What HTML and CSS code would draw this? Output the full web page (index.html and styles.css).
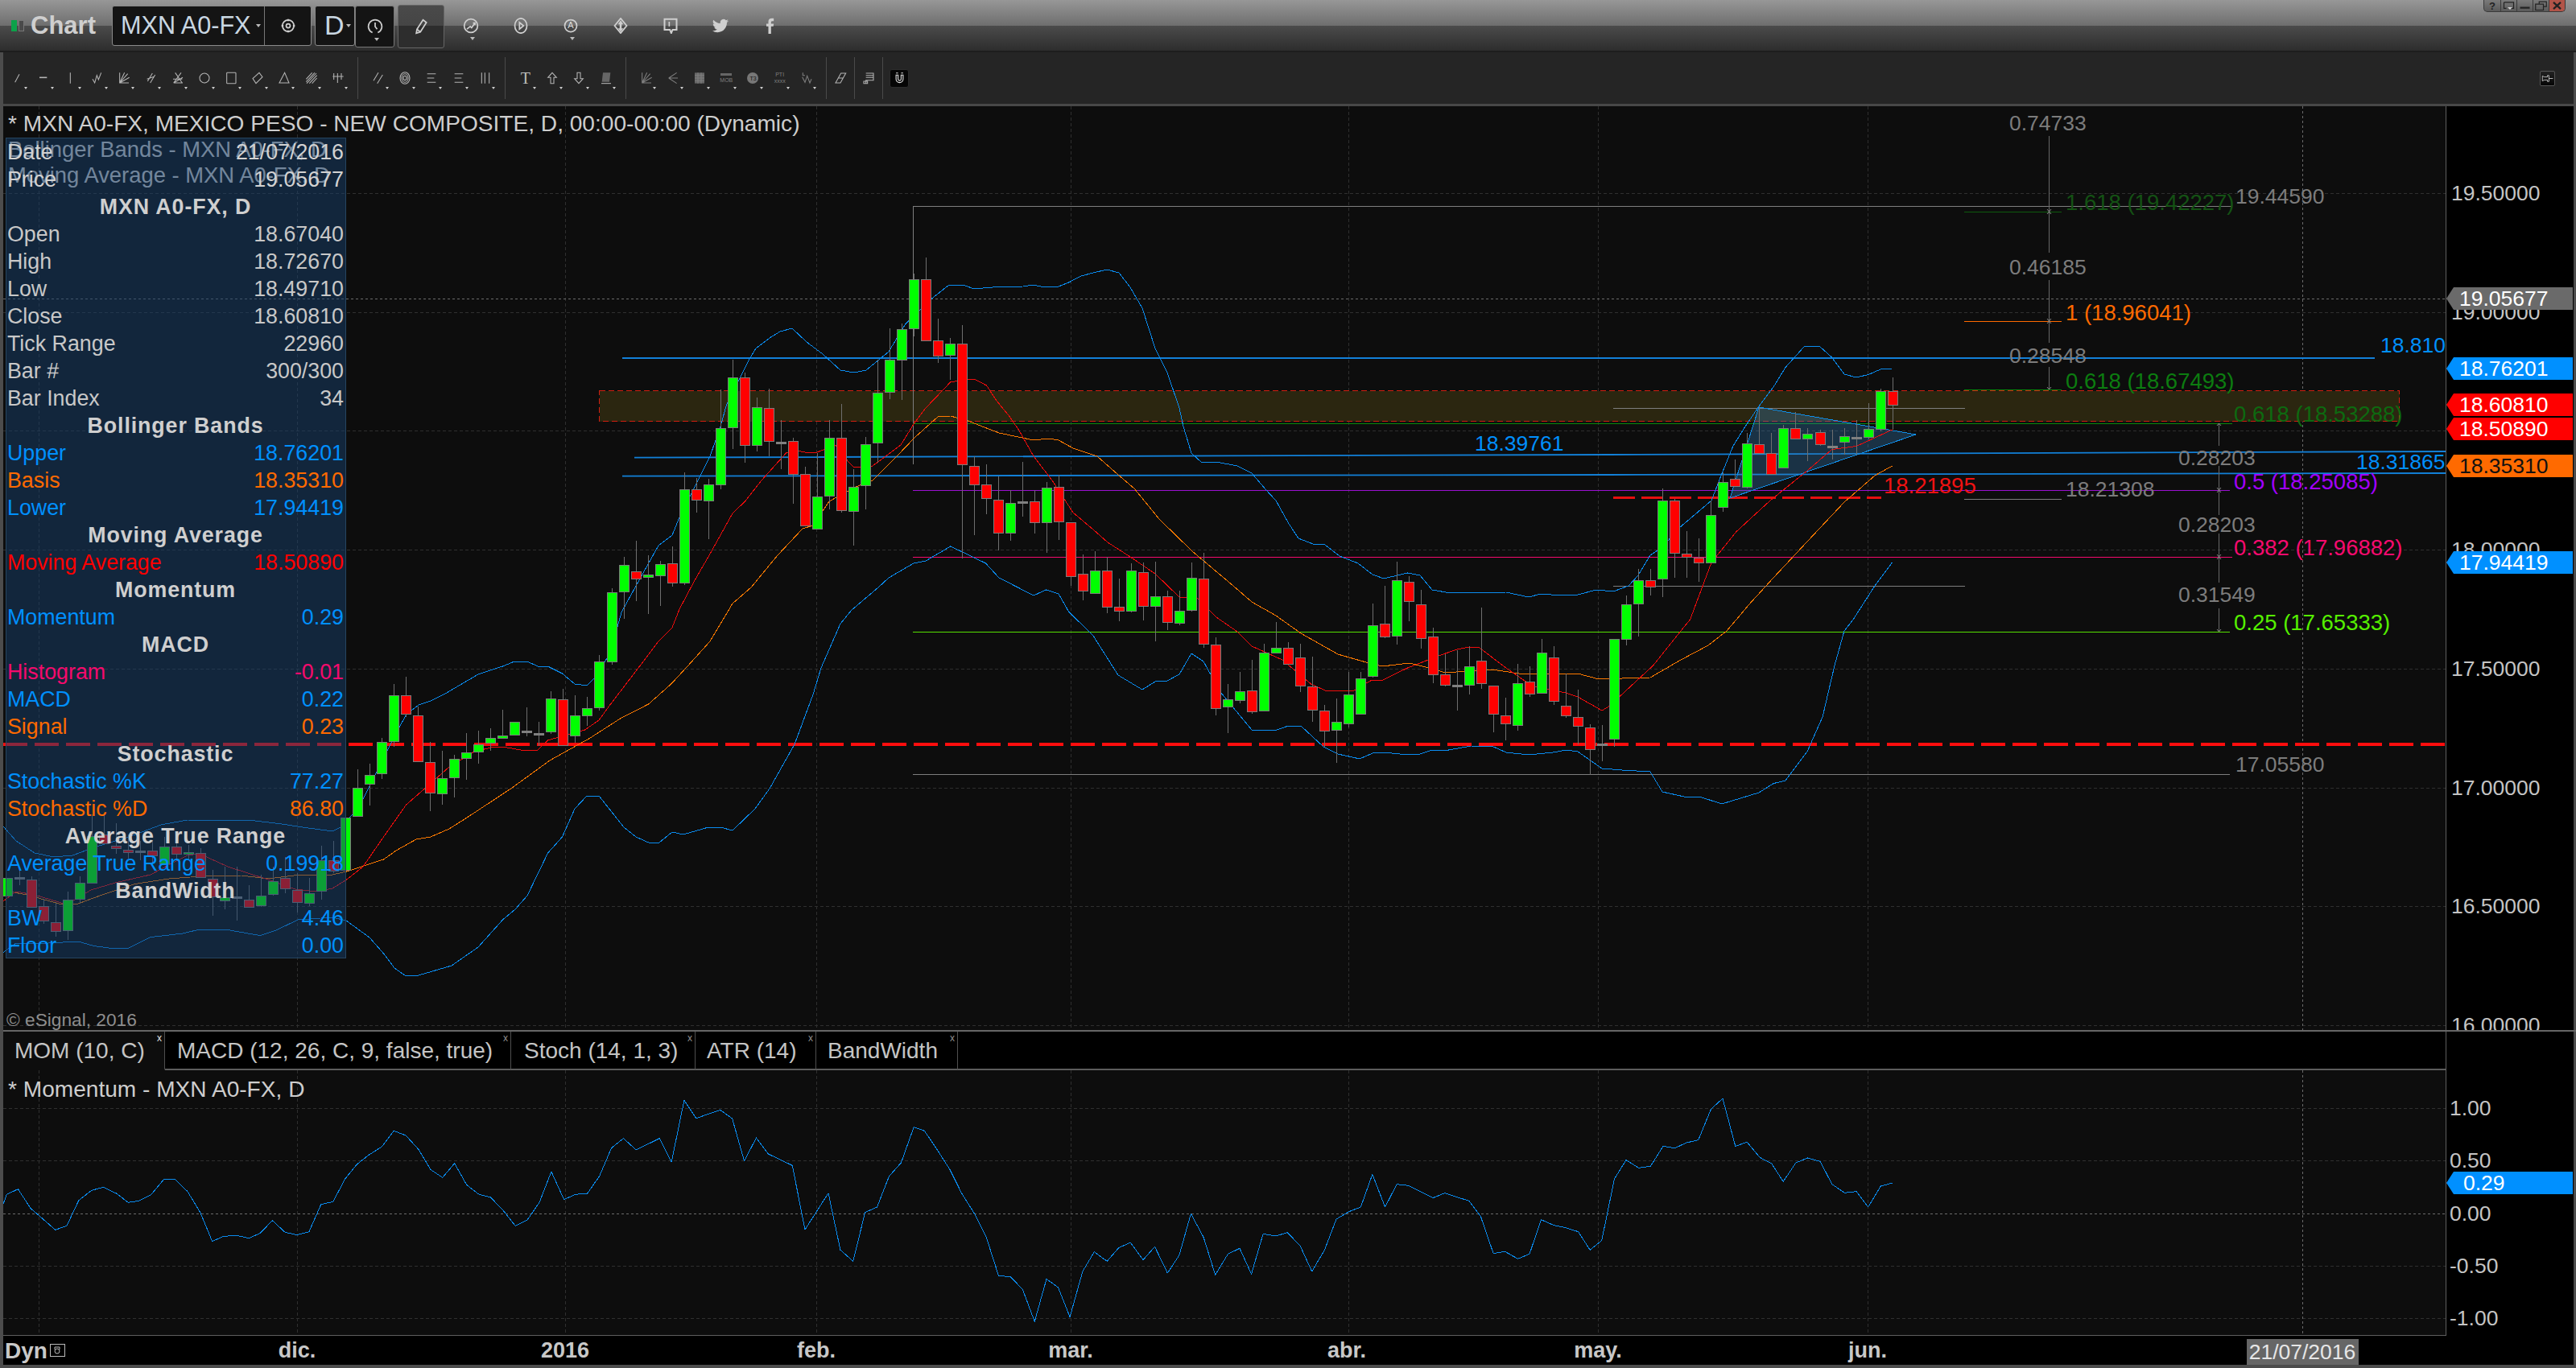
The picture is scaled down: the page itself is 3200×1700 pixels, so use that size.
FILE: index.html
```html
<!DOCTYPE html>
<html lang="es">
<head>
<meta charset="utf-8">
<title>Chart</title>
<link rel="stylesheet" href="styles.css">
</head>
<body>
<svg class="sprite" aria-hidden="true">
  <symbol id="i-line" viewBox="0 0 24 24"><path d="M7 20L15 5"/></symbol>
  <symbol id="i-dash" viewBox="0 0 24 24"><path d="M3 11H17" stroke-width="2.4"/></symbol>
  <symbol id="i-vert" viewBox="0 0 24 24"><path d="M11 2V22"/></symbol>
  <symbol id="i-zig" viewBox="0 0 24 24"><path d="M3 14L7 21L11 7L14 15L19 2"/></symbol>
  <symbol id="i-fan" viewBox="0 0 24 24"><path d="M4 2V21H21M4 21L19 4M4 21L22 11M4 21L13 2"/></symbol>
  <symbol id="i-par" viewBox="0 0 24 24"><path d="M5 18L14 3M10 21L19 6M4 14L18 9"/></symbol>
  <symbol id="i-gann" viewBox="0 0 24 24"><path d="M4 21L18 2M4 21L21 11M4 21H21M7 2L20 21M3 14H20"/></symbol>
  <symbol id="i-circle" viewBox="0 0 24 24"><circle cx="12" cy="12" r="9"/></symbol>
  <symbol id="i-rect" viewBox="0 0 24 24"><rect x="4" y="2" width="17" height="20" rx="1"/></symbol>
  <symbol id="i-diamond" viewBox="0 0 24 24"><path d="M15 2L21 10L9 22L3 13Z"/></symbol>
  <symbol id="i-tri" viewBox="0 0 24 24"><path d="M13 2L21 21L3 21Z"/></symbol>
  <symbol id="i-hatch" viewBox="0 0 24 24"><path d="M2 14L13 2M2 19L18 2M3 22L21 3M8 22L22 7M13 22L22 12"/></symbol>
  <symbol id="i-fork" viewBox="0 0 24 24"><path d="M4 3V15M11 3V21M18 3V15M2 9H22"/></symbol>
  <symbol id="i-dslash" viewBox="0 0 24 24"><path d="M3 17L12 2M10 22L20 6"/></symbol>
  <symbol id="i-rings" viewBox="0 0 24 24"><ellipse cx="12" cy="12" rx="9" ry="11"/><ellipse cx="12" cy="12" rx="6" ry="8"/><ellipse cx="12" cy="12" rx="3" ry="4"/></symbol>
  <symbol id="i-lines" viewBox="0 0 24 24"><path d="M4 4H20M4 12H17M4 20H20"/></symbol>
  <symbol id="i-bars" viewBox="0 0 24 24"><path d="M5 2V22M11 2V22M19 2V22"/></symbol>
  <symbol id="i-up" viewBox="0 0 24 24"><path d="M12 2L20 11H15V22H9V11H4Z"/></symbol>
  <symbol id="i-down" viewBox="0 0 24 24"><path d="M9 2H15V13H20L12 22L4 13H9Z"/></symbol>
  <symbol id="i-block" viewBox="0 0 24 24"><path class="solid-dim" d="M6 2H20L18 19H4Z"/><path d="M3 22H21"/></symbol>
  <symbol id="i-fan2" viewBox="0 0 24 24"><path d="M4 12L19 2M4 12L21 12M4 12L19 22"/></symbol>
  <symbol id="i-table" viewBox="0 0 24 24"><path class="solid-dim" d="M3 2H21V22H3Z"/><path d="M3 7H21M3 12H21M3 17H21M9 2V22M15 2V22"/></symbol>
  <symbol id="i-wave" viewBox="0 0 24 24"><path d="M4 10L9 20L13 8L18 21L21 14M5 2V7H9"/></symbol>
  <symbol id="i-eraser" viewBox="0 0 24 24"><path d="M13 3H22L12 21H3ZM8 12H17"/></symbol>
  <symbol id="i-note" viewBox="0 0 24 24"><path d="M7 3H21V16H7V22M7 7H21M7 11H21M3 18H10V22H3Z"/></symbol>
  <symbol id="i-magnet" viewBox="0 0 24 24"><path d="M5 6V14A7 7 0 0 0 19 14V6H15V14A3 3 0 0 1 9 14V6Z"/><path d="M5 2H9M15 2H19"/></symbol>
  <symbol id="i-pin" viewBox="0 0 24 24"><path d="M2 7L6 9H12V6L15 6V18L12 18V15H6L2 17ZM15 12H23"/></symbol>
  <symbol id="i-gear" viewBox="0 0 24 24"><circle cx="12" cy="12" r="8.5"/><circle cx="12" cy="12" r="3"/><path d="M12 2V5M12 19V22M2 12H5M19 12H22" stroke-width="3"/></symbol>
  <symbol id="i-clock" viewBox="0 0 24 24"><path d="M8 21A10 10 0 1 1 16 21M12 6V12L15 16"/></symbol>
  <symbol id="i-pencil" viewBox="0 0 24 24"><path d="M15 2L20 6L11 20L5 22L6 16ZM6 16L11 20"/></symbol>
  <symbol id="i-trend" viewBox="0 0 24 24"><circle cx="12" cy="12" r="10"/><path d="M6 17L11 13L13 15L18 8M15 8H18V11"/></symbol>
  <symbol id="i-play" viewBox="0 0 24 24"><ellipse cx="12" cy="12" rx="9" ry="11"/><path d="M10 7L16 12L10 17Z"/></symbol>
  <symbol id="i-swap" viewBox="0 0 24 24"><path d="M12 1L21 12L12 23L3 12Z"/><path class="solid" d="M12 4L16 10H13.5V16H16L12 21L8 16H10.5V10H8Z"/></symbol>
  <symbol id="i-bubble" viewBox="0 0 24 24"><path d="M3 2H21V18H15L13 23L11 18H3Z" stroke-width="2.4"/><path d="M10 6V13" stroke-width="2"/></symbol>
  <symbol id="i-bird" viewBox="0 0 24 24"><path class="solid" d="M23.95 4.57a10 10 0 0 1-2.82.78 4.96 4.96 0 0 0 2.16-2.72 9.9 9.9 0 0 1-3.12 1.18 4.92 4.92 0 0 0-8.38 4.48A13.98 13.98 0 0 1 1.64 3.16 4.92 4.92 0 0 0 3.2 9.72a4.9 4.9 0 0 1-2.23-.61v.06a4.92 4.92 0 0 0 3.95 4.83 4.9 4.9 0 0 1-2.21.08 4.93 4.93 0 0 0 4.6 3.42A9.87 9.87 0 0 1 0 19.54a13.94 13.94 0 0 0 7.55 2.21c9.05 0 14-7.5 14-13.98 0-.21 0-.42-.02-.63a10 10 0 0 0 2.46-2.55z"/></symbol>
  <symbol id="i-face" viewBox="0 0 24 24"><path class="solid" d="M9 24V13H6V9H9V6C9 2.5 11 1 14 1H17V5H15C13.600 5 13 5.600 13 7V9H17L16.400 13H13V24Z"/></symbol>
  <symbol id="w-drop" viewBox="0 0 20 15"><path d="M2 2H18V12H12M2 2V12H6"/><path class="solid" d="M8 10H16L12 14Z"/></symbol>
  <symbol id="w-min" viewBox="0 0 20 15"><path d="M2 11H18" stroke-width="3"/></symbol>
  <symbol id="w-max" viewBox="0 0 20 15"><path d="M7 5V1H19V9H14M1 5H14V15H1Z" stroke-width="1.600"/></symbol>
  <symbol id="w-close" viewBox="0 0 20 15"><path d="M4 2L16 13M16 2L4 13" stroke-width="3"/></symbol>
</svg>

<div class="window">
  <header class="titlebar">
    <span class="led led-on"></span><span class="led"></span>
    <span class="app-title">Chart</span>
    <div class="symbol-box">
      <span class="symbol-name">MXN A0-FX<i class="caret caret-light"></i></span>
      <span class="symbol-gear"><svg class="ico ico-title"><use href="#i-gear"/></svg></span>
    </div>
    <div class="interval-box">D<i class="caret caret-light"></i></div>
    <div class="clock-box"><svg class="ico ico-title"><use href="#i-clock"/></svg><i class="caret caret-under"></i></div>
    <div class="pencil-box"><svg class="ico ico-title"><use href="#i-pencil"/></svg></div>
    <div class="title-tools">
      <span class="title-tool"><svg class="ico ico-title"><use href="#i-trend"/></svg><i class="caret caret-under"></i></span>
      <span class="title-tool"><svg class="ico ico-title"><use href="#i-play"/></svg></span>
      <span class="title-tool"><svg class="ico ico-title"><use href="#i-circle"/></svg><b class="a-mark">A</b><i class="caret caret-under"></i></span>
      <span class="title-tool"><svg class="ico ico-title"><use href="#i-swap"/></svg></span>
      <span class="title-tool"><svg class="ico ico-title"><use href="#i-bubble"/></svg></span>
      <span class="title-tool"><svg class="ico ico-title"><use href="#i-bird"/></svg></span>
      <span class="title-tool"><svg class="ico ico-title"><use href="#i-face"/></svg></span>
    </div>
    <div class="window-buttons">
      <span class="win-btn">?</span>
      <span class="win-btn"><svg class="win-ico"><use href="#w-drop"/></svg></span>
      <span class="win-btn"><svg class="win-ico"><use href="#w-min"/></svg></span>
      <span class="win-btn"><svg class="win-ico"><use href="#w-max"/></svg></span>
      <span class="win-btn win-close"><svg class="win-ico"><use href="#w-close"/></svg></span>
    </div>
  </header>

  <nav class="toolbar">
    <div class="tool-group">
      <span class="tool"><svg class="ico"><use href="#i-line"/></svg></span>
      <span class="tool"><svg class="ico"><use href="#i-dash"/></svg></span>
      <span class="tool"><svg class="ico"><use href="#i-vert"/></svg></span>
      <span class="tool"><svg class="ico"><use href="#i-zig"/></svg></span>
      <span class="tool"><svg class="ico"><use href="#i-fan"/></svg></span>
      <span class="tool"><svg class="ico"><use href="#i-par"/></svg></span>
      <span class="tool"><svg class="ico"><use href="#i-gann"/></svg></span>
      <span class="tool"><svg class="ico"><use href="#i-circle"/></svg></span>
      <span class="tool"><svg class="ico"><use href="#i-rect"/></svg></span>
      <span class="tool"><svg class="ico"><use href="#i-diamond"/></svg></span>
      <span class="tool"><svg class="ico"><use href="#i-tri"/></svg></span>
      <span class="tool"><svg class="ico"><use href="#i-hatch"/></svg></span>
      <span class="tool"><svg class="ico"><use href="#i-fork"/></svg></span>
    </div>
    <div class="tool-group">
      <span class="tool"><svg class="ico"><use href="#i-dslash"/></svg></span>
      <span class="tool"><svg class="ico"><use href="#i-rings"/></svg></span>
      <span class="tool"><svg class="ico"><use href="#i-lines"/></svg></span>
      <span class="tool"><svg class="ico"><use href="#i-lines"/></svg></span>
      <span class="tool"><svg class="ico"><use href="#i-bars"/></svg></span>
    </div>
    <div class="tool-group">
      <span class="tool tool-t">T</span>
      <span class="tool"><svg class="ico"><use href="#i-up"/></svg></span>
      <span class="tool"><svg class="ico"><use href="#i-down"/></svg></span>
      <span class="tool"><svg class="ico"><use href="#i-block"/></svg></span>
    </div>
    <div class="tool-group tool-group-dim">
      <span class="tool"><svg class="ico"><use href="#i-fan"/></svg></span>
      <span class="tool"><svg class="ico"><use href="#i-fan2"/></svg></span>
      <span class="tool"><svg class="ico"><use href="#i-table"/></svg></span>
      <span class="tool tool-mob">MOB</span>
      <span class="tool tool-t3">T3</span>
      <span class="tool tool-pti">PTI<br>xxxx</span>
      <span class="tool"><svg class="ico"><use href="#i-wave"/></svg></span>
    </div>
    <div class="tool-group"><span class="tool tool-plain"><svg class="ico"><use href="#i-eraser"/></svg></span></div>
    <div class="tool-group"><span class="tool tool-plain"><svg class="ico"><use href="#i-note"/></svg></span></div>
    <div class="tool-group tool-group-last"><span class="magnet-box"><svg class="ico ico-magnet"><use href="#i-magnet"/></svg></span></div>
    <span class="pin-box"><svg class="ico ico-pin"><use href="#i-pin"/></svg></span>
  </nav>

  <main class="main-pane">
    <svg class="chart" id="mainChart" width="3193" height="1148" viewBox="4 132 3193 1148">
      <rect class="axis-bg" x="3039" y="132" width="158" height="1148"/>
      <g class="grid">
        <path d="M48 132V1280M369 132V1280M702 132V1280M1014 132V1280M1330 132V1280M1675 132V1280M1985 132V1280M2320 132V1280"/>
        <path d="M4 240.500H3038M4 388.500H3038M4 535.500H3038M4 683.500H3038M4 831.500H3038M4 979.500H3038M4 1126.500H3038M4 1274.500H3038"/>
      </g>
      <g class="grid grid-cur">
        <path d="M2860.500 132V1280M4 371.500H3038"/>
      </g>
      <!-- drawings -->
      <rect class="zone" x="744.500" y="485.500" width="2236" height="38"/>
      <path class="d-blue" d="M773 445H2950"/>
      <path class="d-blue" d="M788 568.700L2000 565L3038 561"/>
      <path class="d-blue" d="M773 591.700L2000 590L3038 588"/>
      <path class="d-gray" d="M1134.500 577V256.500H2773"/>
      <path class="d-gray" d="M1134 962.500H2770M2004 507.500H2441M2004 728.500H2441M2440 620.500H2561"/>
      <path class="d-dkgreen" d="M2440 263.500H2561"/>
      <path class="d-orange" d="M2440 399.500H2561"/>
      <path class="d-green" d="M2440 484.500H2561M1134 526.500H2773"/>
      <path class="d-purple" d="M1134 609.500H2770"/>
      <path class="d-pink" d="M1134 692.500H2773"/>
      <path class="d-lime" d="M1134 785.500H2770"/>
      <path class="d-vert" d="M2545.500 169V314M2545.500 348V426M2545.500 456V484M2756.500 526V554M2756.500 579V640M2756.500 663V724M2756.500 756V785"/>
      <path class="d-head" d="M2543 260L2545.500 263L2548 260M2543 266L2545.500 263L2548 266M2543 396L2545.500 399L2548 396M2543 402L2545.500 399L2548 402M2543 481L2545.500 484L2548 481M2754 529L2756.500 526L2759 529M2754 606L2756.500 609L2759 606M2754 612L2756.500 609L2759 612M2754 689L2756.500 692L2759 689M2754 695L2756.500 692L2759 695M2754 782L2756.500 785L2759 782"/>
      <path class="d-support" d="M4 924.500H3038"/>
      <path class="d-red-short" d="M2004 618.500H2337"/>
      <polygon class="triangle" points="2185,506 2380,540 2149,619"/>
      <g id="bands"></g>
      <g id="candles"></g>
      <!-- labels -->
      <text class="t t-title" x="10" y="153">* MXN A0-FX, MEXICO PESO - NEW COMPOSITE, D, 00:00-00:00 (Dynamic)</text>
      <text class="t t-dim" x="10" y="185">Bollinger Bands - MXN A0-FX, D</text>
      <text class="t t-dim" x="10" y="217">Moving Average - MXN A0-FX, D</text>
      <text class="t t-copy" x="8" y="1267">© eSignal, 2016</text>
      <text class="t l-gray" x="2496" y="153">0.74733</text>
      <text class="t l-gray" x="2777" y="244">19.44590</text>
      <text class="t t-fib l-dkgreen" x="2566" y="251">1.618 (19.42227)</text>
      <text class="t l-gray" x="2496" y="332">0.46185</text>
      <text class="t t-fib l-orange" x="2566" y="388">1 (18.96041)</text>
      <text class="t l-blue" x="2957" y="429">18.810</text>
      <text class="t l-gray" x="2496" y="442">0.28548</text>
      <text class="t t-fib l-green" x="2566" y="473">0.618 (18.67493)</text>
      <text class="t t-fib l-green2" x="2775" y="514">0.618 (18.53288)</text>
      <text class="t l-blue" x="1832" y="551">18.39761</text>
      <text class="t l-gray" x="2706" y="569">0.28203</text>
      <text class="t l-blue" x="2927" y="574">18.31865</text>
      <text class="t t-fib l-purple" x="2775" y="598">0.5 (18.25085)</text>
      <text class="t t-fib l-red" x="2340" y="603">18.21895</text>
      <text class="t l-gray" x="2566" y="608">18.21308</text>
      <text class="t l-gray" x="2706" y="652">0.28203</text>
      <text class="t t-fib l-pink" x="2775" y="680">0.382 (17.96882)</text>
      <text class="t l-gray" x="2706" y="739">0.31549</text>
      <text class="t t-fib l-lime" x="2775" y="773">0.25 (17.65333)</text>
      <text class="t l-gray" x="2777" y="950">17.05580</text>
      <!-- price axis -->
      <path class="axis-line" d="M3038.500 132V1280"/>
      <g class="axis-labels">
        <text class="t" x="3045" y="240">19.50000</text>
        <text class="t" x="3045" y="388">19.00000</text>
        <text class="t" x="3045" y="683">18.00000</text>
        <text class="t" x="3045" y="831">17.50000</text>
        <text class="t" x="3045" y="979">17.00000</text>
        <text class="t" x="3045" y="1126">16.50000</text>
        <text class="t" x="3045" y="1274">16.00000</text>
      </g>
      <g class="tag tag-gray"><polygon points="3039,371 3048,357 3196,357 3196,385 3048,385"/><text class="t" x="3055" y="371">19.05677</text></g>
      <g class="tag tag-blue"><polygon points="3039,458 3048,444 3196,444 3196,472 3048,472"/><text class="t" x="3055" y="458">18.76201</text></g>
      <g class="tag tag-red"><polygon points="3039,503 3048,489 3196,489 3196,517 3048,517"/><text class="t" x="3055" y="503">18.60810</text></g>
      <g class="tag tag-red"><polygon points="3039,533 3048,519 3196,519 3196,547 3048,547"/><text class="t" x="3055" y="533">18.50890</text></g>
      <g class="tag tag-orange"><polygon points="3039,579 3048,565 3196,565 3196,593 3048,593"/><text class="t" x="3055" y="579">18.35310</text></g>
      <g class="tag tag-blue"><polygon points="3039,699 3048,685 3196,685 3196,713 3048,713"/><text class="t" x="3055" y="699">17.94419</text></g>
    </svg>

    <aside class="panel">
      <div class="row row-dim"><span>Date</span><span>21/07/2016</span></div>
      <div class="row row-dim"><span>Price</span><span>19.05677</span></div>
      <div class="row-head">MXN A0-FX, D</div>
      <div class="row"><span>Open</span><span>18.67040</span></div>
      <div class="row"><span>High</span><span>18.72670</span></div>
      <div class="row"><span>Low</span><span>18.49710</span></div>
      <div class="row"><span>Close</span><span>18.60810</span></div>
      <div class="row"><span>Tick Range</span><span>22960</span></div>
      <div class="row"><span>Bar #</span><span>300/300</span></div>
      <div class="row"><span>Bar Index</span><span>34</span></div>
      <div class="row-head">Bollinger Bands</div>
      <div class="row row-blue"><span>Upper</span><span>18.76201</span></div>
      <div class="row row-orange"><span>Basis</span><span>18.35310</span></div>
      <div class="row row-blue"><span>Lower</span><span>17.94419</span></div>
      <div class="row-head">Moving Average</div>
      <div class="row row-red"><span>Moving Average</span><span>18.50890</span></div>
      <div class="row-head">Momentum</div>
      <div class="row row-blue"><span>Momentum</span><span>0.29</span></div>
      <div class="row-head">MACD</div>
      <div class="row row-pink"><span>Histogram</span><span>-0.01</span></div>
      <div class="row row-blue"><span>MACD</span><span>0.22</span></div>
      <div class="row row-orange"><span>Signal</span><span>0.23</span></div>
      <div class="row-head">Stochastic</div>
      <div class="row row-blue"><span>Stochastic %K</span><span>77.27</span></div>
      <div class="row row-orange"><span>Stochastic %D</span><span>86.80</span></div>
      <div class="row-head">Average True Range</div>
      <div class="row row-blue"><span>Average True Range</span><span>0.19918</span></div>
      <div class="row-head">BandWidth</div>
      <div class="row row-blue"><span>BW</span><span>4.46</span></div>
      <div class="row row-blue"><span>Floor</span><span>0.00</span></div>
    </aside>
  </main>

  <div class="pane-sep"></div>

  <div class="tabs">
    <div class="tab-strip">
      <div class="tab tab-active tab-mom">MOM (10, C)<i class="tab-x">x</i></div>
      <div class="tab tab-macd">MACD (12, 26, C, 9, false, true)<i class="tab-x">x</i></div>
      <div class="tab tab-stoch">Stoch (14, 1, 3)<i class="tab-x">x</i></div>
      <div class="tab tab-atr">ATR (14)<i class="tab-x">x</i></div>
      <div class="tab tab-bw">BandWidth<i class="tab-x">x</i></div>
      <div class="tab-fill"></div>
    </div>
  </div>

  <section class="lower-pane">
    <svg class="chart" id="lowerChart" width="3193" height="330" viewBox="4 1330 3193 330">
      <rect class="axis-bg" x="3039" y="1330" width="158" height="330"/>
      <g class="grid">
        <path d="M48 1330V1659M369 1330V1659M702 1330V1659M1014 1330V1659M1330 1330V1659M1675 1330V1659M1985 1330V1659M2320 1330V1659"/>
        <path d="M4 1377.500H3038M4 1442.500H3038M4 1573.500H3038M4 1638.500H3038"/>
      </g>
      <g class="grid grid-cur"><path d="M2860.500 1330V1659M4 1508.500H3038"/></g>
      <g id="momentum"></g>
      <text class="t t-title" x="10" y="1353">* Momentum - MXN A0-FX, D</text>
      <path class="axis-line" d="M3038.500 1330V1660M4 1659.500H3038"/>
      <g class="axis-labels">
        <text class="t" x="3043" y="1377">1.00</text>
        <text class="t" x="3043" y="1442">0.50</text>
        <text class="t" x="3043" y="1508">0.00</text>
        <text class="t" x="3043" y="1573">-0.50</text>
        <text class="t" x="3043" y="1638">-1.00</text>
      </g>
      <g class="tag tag-blue"><polygon points="3039,1470 3048,1456 3196,1456 3196,1484 3048,1484"/><text class="t" x="3060" y="1470">0.29</text></g>
    </svg>
  </section>

  <footer class="time-axis">
    <svg class="chart" width="3193" height="36" viewBox="4 1660 3193 36">
      <text class="t t-time t-dyn" x="6" y="1678">Dyn</text>
      <g class="lock"><rect x="62.500" y="1670.500" width="18" height="15"/><circle cx="71" cy="1679" r="3"/><path d="M68 1677V1674H74V1677"/></g>
      <text class="t t-time" x="369" y="1678">dic.</text>
      <text class="t t-time" x="702" y="1678">2016</text>
      <text class="t t-time" x="1014" y="1678">feb.</text>
      <text class="t t-time" x="1330" y="1678">mar.</text>
      <text class="t t-time" x="1673" y="1678">abr.</text>
      <text class="t t-time" x="1985" y="1678">may.</text>
      <text class="t t-time" x="2320" y="1678">jun.</text>
      <rect class="date-tag" x="2791" y="1664" width="139" height="32"/>
      <text class="t t-date" x="2860" y="1680">21/07/2016</text>
    </svg>
  </footer>
</div>
<script src="chart.js"></script>
</body>
</html>
```

FILE: styles.css
```css
* { box-sizing: border-box; }
html, body { margin: 0; padding: 0; background: #000; }
body { font-family: "Liberation Sans", Arial, sans-serif; color: #c8c8c8; overflow: hidden; }
.sprite { display: none; }

.window {
  width: 3200px;
  height: 1700px;
  display: flex;
  flex-direction: column;
  background: #000;
  border-left: 4px solid #4c4c4c;
  border-right: 3px solid #4c4c4c;
  border-bottom: 4px solid #4c4c4c;
  margin: 0;
}

/* title bar */
.titlebar {
  height: 63px;
  margin: 0 -3px 2px -4px;
  padding-left: 14px;
  display: flex;
  align-items: center;
  background: linear-gradient(#979797 0, #6e6e6e 32px, #4b4b4b 32px, #2d2d2d 63px);
  box-shadow: 0 2px 0 #1d1d1d;
}
.led { width: 7px; height: 14px; margin-right: 2px; background: #4a4a4a; border: 1px solid #777; }
.led-on { background: #0ca24a; border-color: #0ca24a; }
.app-title { width: 101px; margin-left: 6px; font-size: 31px; font-weight: 700; color: #cfcfcf; }
.symbol-box {
  width: 248px;
  height: 50px;
  display: flex;
  background: #141414;
  border: 1px solid #8a8a8a;
  border-radius: 3px;
}
.symbol-name {
  width: 189px;
  padding-left: 10px;
  display: flex;
  align-items: center;
  font-size: 30.6px;
  color: #c9d7e2;
  border-right: 1px solid #777;
  white-space: nowrap;
}
.symbol-gear { flex: 1; display: flex; align-items: center; justify-content: center; }
.caret { display: block; width: 0; height: 0; border-left: 3px solid transparent; border-right: 3px solid transparent; border-top: 4px solid #bbb; }
.caret-light { margin-left: 6px; }
.caret-under { position: absolute; left: calc(50% - 1px); bottom: 7px; }
.interval-box {
  width: 50px;
  height: 50px;
  margin-left: 4px;
  padding-left: 11px;
  display: flex;
  align-items: center;
  font-size: 34px;
  color: #c9d7e2;
  background: #141414;
  border: 1px solid #8a8a8a;
  border-radius: 3px;
}
.interval-box .caret { margin-left: 2px; }
.clock-box {
  position: relative;
  width: 49px;
  height: 52px;
  margin-top: 3px;
  display: flex;
  align-items: center;
  justify-content: center;
  background: #141414;
  border: 1px solid #777;
  border-radius: 3px;
}
.pencil-box {
  width: 58px;
  height: 54px;
  margin: 2px 0 0 4px;
  display: flex;
  align-items: center;
  justify-content: center;
  background: linear-gradient(#4a4a4a 0, #454545 49%, #2d2d2d 49%, #2d2d2d 100%);
  border: 1px solid #666;
  border-radius: 3px;
}
.title-tools { display: flex; margin-left: 2px; }
.title-tool { position: relative; width: 62px; height: 50px; display: flex; align-items: center; justify-content: center; }
.a-mark { position: absolute; left: 0; right: 0; top: 18px; text-align: center; font-size: 11px; font-weight: 400; color: #ddd; }
.ico { width: 16px; height: 16px; fill: none; stroke: #b4b4b4; stroke-width: 1.6; }
.ico-title { width: 20px; height: 20px; stroke: #cfcfcf; stroke-width: 2.1; }
.solid { fill: currentColor; stroke: none; color: #cfcfcf; }
.solid-dim { fill: #666; stroke: none; }

.window-buttons {
  display: flex;
  align-self: flex-start;
  margin-left: auto;
  margin-right: 13px;
  height: 15px;
  background: linear-gradient(#7a7a7a, #5a5a5a);
  border: 1px solid #3a3a3a;
  border-top: 0;
  border-radius: 0 0 5px 5px;
  overflow: hidden;
}
.win-btn {
  width: 20px;
  display: flex;
  align-items: center;
  justify-content: center;
  font-size: 13px;
  font-weight: 700;
  color: #222;
  border-left: 1px solid #3a3a3a;
}
.win-btn:first-child { border-left: 0; }
.win-ico { width: 15px; height: 12px; fill: none; stroke: #222; stroke-width: 1.6; }
.win-close { background: #b25448; }

/* drawing toolbar */
.toolbar {
  height: 64px;
  display: flex;
  align-items: center;
  padding-left: 1px;
  background: #252525;
  border-bottom: 0;
}
.tool-group {
  height: 52px;
  display: flex;
  align-items: center;
  padding-right: 8px;
  margin-right: 8px;
  border-right: 1px solid #4a4a4a;
}
.tool-group-last { border-right: 0; margin-right: 0; padding-right: 0; }
.tool-group-dim .ico { stroke: #7e7e7e; }
.tool {
  position: relative;
  width: 33.2px;
  height: 32px;
  display: flex;
  align-items: center;
  justify-content: center;
  color: #bdbdbd;
}
.tool::after {
  content: "";
  position: absolute;
  right: 4px;
  bottom: 2px;
  border-left: 2.5px solid transparent;
  border-right: 2.5px solid transparent;
  border-top: 3px solid #ccc;
}
.tool-plain { width: 18px; }
.tool-plain::after { display: none; }
.tool-t { font-family: "Liberation Serif", serif; font-size: 20px; }
.tool-mob { flex-direction: column; font-size: 7px; color: #7e7e7e; border-top: 0; }
.tool-mob::before { content: ""; width: 14px; height: 3px; background: #666; margin-bottom: 2px; }
.tool-t3 { font-size: 7px; color: #111; isolation: isolate; }
.tool-t3::before { content: ""; position: absolute; left: 9px; top: 9px; width: 14px; height: 14px; border-radius: 50%; background: #777; z-index: -1; }
.tool-pti { font-size: 7px; line-height: 8px; text-align: center; color: #7e7e7e; }
.magnet-box {
  width: 24px;
  height: 23px;
  display: flex;
  align-items: center;
  justify-content: center;
  background: #050505;
  border-radius: 3px;
  border: 1px solid #2c2c2c;
}
.ico-magnet { width: 15px; height: 18px; stroke: #e2e2e2; stroke-width: 1.8; }
.pin-box {
  width: 19px;
  height: 19px;
  margin-left: auto;
  margin-right: 23px;
  display: flex;
  align-items: center;
  justify-content: center;
  background: linear-gradient(#222, #050505);
  border: 1px solid #555;
  border-radius: 2px;
}
.ico-pin { width: 15px; height: 15px; stroke: #c8c8c8; stroke-width: 1.4; }

/* panes */
.main-pane {
  position: relative;
  height: 1148px;
  border-top: 0;
  box-shadow: 0 -3px 0 #484848;
  margin-top: 3px;
  background: #0d0d0d;
}
.pane-sep { height: 2px; margin-right: -3px; background: #666; flex: none; }
.chart { display: block; }
.chart text { white-space: pre; }
.lower-pane { height: 330px; background: #0d0d0d; flex: none; }
.time-axis { height: 36px; background: #000; flex: none; }
.axis-bg { fill: #000; }
.axis-line { fill: none; stroke: #5e5e5e; stroke-width: 1; shape-rendering: crispEdges; }

.grid path { fill: none; stroke: #2f2f2f; stroke-width: 1; stroke-dasharray: 4 3; shape-rendering: crispEdges; }
.grid-cur path { stroke: #6a6a6a; stroke-dasharray: 3 3; }

/* chart text */
.t { font-family: "Liberation Sans", Arial, sans-serif; font-size: 26.5px; dominant-baseline: central; }
.t-title { fill: #cdcdcd; font-size: 28.1px; }
.t-dim { fill: #cdcdcd; font-size: 27.4px; }
.t-fib { font-size: 27.5px; }
.t-copy { fill: #8e8e8e; font-size: 22.7px; }
.l-gray { fill: #7c7c7c; }
.l-dkgreen { fill: #145214; }
.l-green { fill: #0c7c10; }
.l-green2 { fill: #0d6a10; }
.l-orange { fill: #ff6a00; }
.l-blue { fill: #0090ff; }
.l-purple { fill: #a200ff; }
.l-red { fill: #f01212; }
.l-pink { fill: #f60a6e; }
.l-lime { fill: #55f000; }
.axis-labels text { fill: #c4c4c4; }
.tag polygon { stroke: none; }
.tag text { fill: #fff; }
.tag-gray polygon { fill: #6a6a6a; }
.tag-blue polygon { fill: #0090ff; }
.tag-red polygon { fill: #ff0000; }
.tag-orange polygon { fill: #ff6a00; }
.tag-orange text { fill: #111; }
.t-time { font-weight: 700; font-size: 27px; fill: #c8c8c8; text-anchor: middle; }
.t-dyn { text-anchor: start; font-size: 28px; }
.t-date { font-size: 26.5px; fill: #e6e6e6; text-anchor: middle; }
.date-tag { fill: #666; }
.lock { fill: none; stroke: #bbb; stroke-width: 1; }

/* drawings */
.zone { fill: #2b2610; stroke: #d01e10; stroke-width: 1; stroke-dasharray: 7 4; shape-rendering: crispEdges; }
.d-blue { fill: none; stroke: #1280d8; stroke-width: 1.8; }
.d-gray { fill: none; stroke: #7e7e7e; stroke-width: 1; shape-rendering: crispEdges; }
.d-dkgreen { fill: none; stroke: #0e5a0e; shape-rendering: crispEdges; }
.d-orange { fill: none; stroke: #ff6a00; shape-rendering: crispEdges; }
.d-green { fill: none; stroke: #0a8a0a; shape-rendering: crispEdges; }
.d-purple { fill: none; stroke: #9a10d0; shape-rendering: crispEdges; }
.d-pink { fill: none; stroke: #f50a6c; shape-rendering: crispEdges; }
.d-lime { fill: none; stroke: #55e000; shape-rendering: crispEdges; }
.d-vert { fill: none; stroke: #686868; shape-rendering: crispEdges; }
.d-head { fill: none; stroke: #8a8a8a; stroke-width: 1; }
.d-support { fill: none; stroke: #ff0d0d; stroke-width: 4; stroke-dasharray: 30 9; shape-rendering: crispEdges; }
.d-red-short { fill: none; stroke: #e61010; stroke-width: 3; stroke-dasharray: 27 8; shape-rendering: crispEdges; }
.triangle { fill: rgba(55, 130, 190, 0.32); stroke: #108ee8; stroke-width: 1; shape-rendering: crispEdges; }

/* series */
.series { fill: none; stroke-width: 1; stroke-linejoin: round; shape-rendering: crispEdges; }
.s-upper { stroke: #0a8cf0; }
.s-basis { stroke: #ff7a00; }
.s-ma { stroke: #f00c0c; }
.s-mom { stroke: #0a8cf0; }
.wick { stroke: #6e6e6e; stroke-width: 1; shape-rendering: crispEdges; }
.body { stroke: #7c7c7c; stroke-width: 1; shape-rendering: crispEdges; }
.body-g { fill: #00ff00; }
.body-r { fill: #ff0000; }
.doji { fill: #808080; shape-rendering: crispEdges; }

/* overlay data panel */
.panel {
  position: absolute;
  left: 3px;
  top: 39px;
  width: 423px;
  height: 1020px;
  display: grid;
  grid-auto-rows: 34px;
  padding: 0 2px 0 1px;
  font-size: 26.8px;
  background: rgba(23, 63, 107, 0.5);
  border: 1px solid #264560;
}
.row { display: flex; justify-content: space-between; align-items: center; color: #c8c8c8; white-space: nowrap; }
.row-dim { color: #d2d2d2; }
.row-head { display: flex; justify-content: center; align-items: center; font-weight: 700; letter-spacing: 0.9px; color: #cfcfcf; white-space: nowrap; }
.row-blue { color: #0090ff; }
.row-orange { color: #ff6a00; }
.row-red { color: #ff0000; }
.row-pink { color: #f50a6c; }

/* indicator tabs */
.tabs { height: 48px; flex: none; background: #000; }
.tab-strip { height: 48px; display: flex; }
.tab {
  position: relative;
  height: 48px;
  padding-top: 2px;
  display: flex;
  align-items: center;
  font-size: 28px;
  color: #c4c4c4;
  background: #000;
  border-right: 1px solid #4f4f4f;
  border-bottom: 2px solid #5c5c5c;
  white-space: nowrap;
}
.tab-active { background: #0d0d0d; border-bottom-color: #0d0d0d; }
.tab-mom { width: 201px; padding-left: 14px; }
.tab-macd { width: 430px; padding-left: 15px; }
.tab-stoch { width: 229px; padding-left: 16px; }
.tab-atr { width: 150px; padding-left: 14px; }
.tab-bw { width: 176px; padding-left: 14px; }
.tab-x { position: absolute; right: 3px; top: 1px; font-size: 12px; font-style: normal; color: #8f8f8f; }
.tab-active .tab-x { color: #e0e0e0; }
.tab-fill { width: 1849px; border-right: 1px solid #5c5c5c; border-bottom: 2px solid #5c5c5c; }
```

FILE: chart.js
```js
/* Candle and indicator data, in plot pixels, drawn into the chart SVGs. */
var NS = "http://www.w3.org/2000/svg";

/* [high, bodyTop, bodyBottom, low, kind] : g up, r down, d doji */
var bars = [
[1091,1091,1113,1113,"g"],[1081,1091,1091,1100,"d"],[1089,1093,1127,1128,"r"],[1117,1126,1144,1148,"r"],[1122,1146,1157,1164,"r"],
[1108,1118,1156,1168,"g"],[1089,1097,1117,1122,"g"],[1012,1039,1097,1098,"g"],[1012,1037,1048,1049,"r"],[1023,1051,1054,1061,"r"],
[1037,1056,1059,1067,"r"],[1045,1058,1058,1069,"d"],[1045,1057,1063,1073,"r"],[1040,1052,1073,1075,"g"],[1040,1052,1061,1070,"r"],
[1050,1059,1061,1068,"g"],[1054,1060,1090,1091,"r"],[1081,1092,1114,1138,"r"],[1077,1115,1119,1130,"g"],[1077,1115,1115,1144,"d"],
[1100,1118,1127,1128,"r"],[1087,1113,1125,1127,"g"],[1077,1095,1111,1113,"g"],[1065,1091,1104,1110,"r"],[1085,1106,1121,1134,"r"],
[1091,1110,1122,1126,"g"],[1051,1069,1107,1118,"g"],[1045,1069,1082,1085,"r"],[1012,1016,1081,1084,"g"],[956,979,1014,1015,"g"],
[949,963,974,1001,"g"],[917,922,961,968,"g"],[850,864,921,928,"g"],[841,864,887,891,"r"],[878,889,946,947,"r"],
[922,947,985,1008,"r"],[933,967,986,1000,"g"],[938,943,966,991,"g"],[911,935,942,969,"g"],[908,925,934,949,"g"],
[905,917,923,933,"g"],[882,914,917,918,"g"],[897,897,913,914,"g"],[879,909,909,915,"d"],[897,912,912,927,"d"],
[859,868,909,912,"g"],[856,869,926,927,"r"],[864,889,914,923,"g"],[866,880,889,902,"g"],[814,822,879,883,"g"],
[731,736,822,826,"g"],[692,702,735,769,"g"],[672,710,719,747,"r"],[690,714,717,763,"g"],[697,701,715,753,"g"],
[679,700,724,729,"r"],[587,608,724,727,"g"],[594,608,621,637,"r"],[595,602,622,670,"g"],[484,532,602,608,"g"],
[447,469,531,558,"g"],[463,469,553,575,"r"],[494,506,553,561,"g"],[483,507,548,567,"r"],[522,550,550,583,"d"],
[544,548,589,626,"r"],[580,589,653,654,"r"],[563,617,657,658,"g"],[522,544,616,633,"g"],[502,544,634,637,"r"],
[583,605,635,678,"g"],[543,552,603,633,"g"],[447,488,550,575,"g"],[408,447,487,496,"g"],[402,409,447,497,"g"],
[340,347,408,418,"g"],[320,347,423,424,"r"],[396,423,442,451,"r"],[420,427,441,472,"g"],[404,427,577,694,"r"],
[567,579,602,665,"r"],[577,602,619,639,"r"],[592,621,662,684,"r"],[609,625,662,672,"g"],[574,624,624,642,"d"],
[609,623,649,663,"r"],[599,606,649,687,"g"],[590,605,648,671,"r"],[649,649,716,728,"r"],[689,713,734,746,"r"],
[685,709,737,738,"g"],[692,709,754,762,"r"],[719,754,759,772,"r"],[700,709,759,761,"g"],[699,711,753,771,"r"],
[698,741,753,797,"g"],[734,741,773,783,"r"],[734,759,774,777,"g"],[699,718,758,760,"g"],[687,719,800,805,"r"],
[792,801,880,889,"r"],[850,869,878,911,"g"],[835,859,870,874,"g"],[820,858,884,887,"r"],[800,811,883,884,"g"],
[773,805,811,812,"g"],[798,805,825,826,"r"],[800,817,852,860,"r"],[816,853,882,897,"r"],[876,883,908,928,"r"],
[868,897,907,948,"g"],[835,863,899,904,"g"],[835,843,887,888,"g"],[750,777,840,842,"g"],[728,775,791,793,"r"],
[698,721,790,801,"g"],[716,723,747,772,"r"],[733,751,793,806,"r"],[780,791,838,849,"r"],[813,838,851,853,"r"],
[808,852,852,883,"d"],[803,828,851,863,"g"],[755,821,849,856,"r"],[852,852,887,910,"r"],[867,889,899,920,"r"],
[825,849,901,908,"g"],[828,847,862,866,"r"],[794,811,861,862,"g"],[803,817,871,876,"r"],[837,877,889,892,"r"],
[857,891,902,925,"r"],[900,904,931,963,"r"],[901,925,925,946,"d"],[794,794,918,928,"g"],[740,751,794,802,"g"],
[707,721,750,791,"g"],[707,721,729,740,"r"],[607,622,719,742,"g"],[620,622,687,718,"r"],[660,688,692,718,"r"],
[669,693,699,723,"r"],[622,640,699,700,"g"],[587,599,630,636,"g"],[571,595,604,605,"r"],[538,551,605,607,"g"],
[505,552,563,564,"r"],[538,563,589,590,"r"],[528,532,581,582,"g"],[512,532,545,546,"r"],[532,539,545,573,"g"],
[534,537,552,554,"r"],[534,555,555,571,"d"],[532,542,549,565,"g"],[522,544,544,565,"d"],[501,533,543,546,"g"],
[483,486,533,536,"g"],[469,486,503,534,"r"]
];

var upper = [4,1027,20,1045,43,1060,67,1065,90,1063,120,1052,160,1040,200,1025,233,1019,317,1020,350,1024,383,1029,413,1033,423,1028,440,1010,451,993,489,917,504.6,888,520,876,535,871,553,862,594,838,624.5,828,639,822,655,822,668,828,680.6,828,698.5,837,714,850,729,852,739,842,757,813,772.4,760,789,730,805.6,700,818,678,835,665,844,643,862,607,882,567,895,530,902.5,503,918,472,930.6,447,939,433,956,420,969,412,984,408,1002,425,1022,440,1044,460,1061,463,1076,460,1104,437,1124.5,403,1155,373,1179,354,1196,354,1210,359,1233,357,1271,356,1284,354,1297,357,1315,356,1327.5,351,1343,343,1358,339,1375,335,1390,339,1404,357,1419,383,1435,433,1450,463,1465,507,1470,530,1480,563,1493,575,1511,574,1537,579,1555,588,1572,608,1585,622,1600.5,650,1613,669,1631,676,1646,677,1664,691,1687,700,1705,714,1719,719,1748.5,712,1764,715,1779,733,1802,737,1871,736,1899,742,1914,738,1940,740,1960,739,1983,733,2004,735,2023,728,2035,715,2050,690,2065,680,2086,656,2126,622,2138,591,2153,554,2168,530,2185,505,2203,481,2218,456.5,2241,431,2260,430,2275.5,444,2291,465,2306,469,2321,465.5,2337,458.6,2350.5,458];

var ma = [4,1120,20,1108,43,1112,83,1124,113,1106,143,1097,187,1087,213,1073,233,1063,248,1061,283,1077,333,1093,367,1105,393,1108,413,1104,430.6,1093,451,1077,476.5,1040,504.6,1000,527.6,980,558,953,573,944,589,934,614,928,624.5,928,652.5,933,668,932,680.6,920,701,914,726.5,907,744,895,757,877,793,830,818,797,835,780,844,757,862,723,885,683,910,638,925.5,623,946,597,976.5,563,991,560,999.5,562,1015,562,1038,553,1053,573,1061,581,1084,579,1119,553,1135,527,1150,507,1180.6,475,1196,472,1210,471,1225.5,479,1238,498,1253.6,517,1266,535,1284,567,1307,597,1333,637,1358,658,1376,674,1404,692,1435,713,1465,742,1486,742,1511,767,1537,785,1555,803,1593,820,1628.6,850,1646,858,1682,858,1702.5,846,1718,845,1748.5,830,1787,815,1810,807,1825,804,1838,805,1868,828,1904,853,1945,861,1960,866,1990,883,2000,877,2011.5,866,2053.6,827,2088,784,2099.5,770,2126,699,2157,660.6,2199,622,2245,585,2275.5,558.6,2306,554.5,2329,544,2350.5,534];

var basis = [4,1106.5,33,1112,77,1124,97,1123,127,1112,167,1098.6,210,1092,250,1089,300,1088,333,1092,373,1087,413,1087,430.6,1083,476.5,1068,492,1057,517,1043,535,1040,558,1030,578.6,1017,634.7,980,683,945,731.6,918,772,892,805.6,875,833.7,850,854,828,882,797,910,750,933,730,966,690,997,657,1010,653,1030,623,1063,605,1084,597,1114,567,1137,543,1165,518,1180.6,517,1200,522,1225.5,532,1241,538,1284,547,1302,545,1315,547,1333,557,1363,567,1389,590,1409,607,1440,645,1481,685,1532,728,1555,748,1585,765,1616,787,1662,813,1697,823,1713,827,1725.5,827,1751,824,1787,833,1794,836,1853,832,1894,838,1924.5,837,1960,837,1986,844,2015,843,2050,842,2088,820,2122,802,2145,784,2157,770,2172,752,2203,718,2252.5,665,2291,624,2329,591,2350.5,579];

var lower = [4,1183.6,20,1172,60,1172,97,1170,117,1175.6,143,1179,160,1178,187,1164.6,227,1160,248,1155,280,1155,323,1162.6,343,1156,370,1143,413,1140,430,1144,459,1165,477,1185.5,490,1203,503,1212,520,1212,561,1200,594,1177,624.5,1143,640,1130,655,1113,680.6,1060,698.5,1040,714,1005,729,989,744,989,775,1028,790,1040,805.6,1047,819,1047,835,1034,849,1037,880,1028,895,1028,910,1032,938,1005,956,980,987,925,1010,863,1020,830,1044,775,1058,758,1091,730,1104,718,1135,700,1150,697,1180.6,679,1200,688,1224.5,700,1241,718,1284,740,1299.5,733,1315,738,1327.5,760,1358,790,1389,839,1419,857,1435,847,1450,846,1465,838,1480,812,1495,822,1516,860,1555,907,1583,908,1600.5,902,1616,902,1644,928,1662,937,1689,943,1705,936,1719,935,1748.5,938,1764,937,1779,932,1794,933,1827.5,927,1853,927,1871,935,1899,938,1929.6,935,1945,932,1960,934,1990,955,2015,957,2050,959,2065,984,2092,990,2111,990,2139,999,2185,985,2203,973.6,2218,970,2245,934,2264,891,2279,827,2291,784,2302,770,2329,728,2350.5,699];

/* momentum: two runs read at different scales, [x, y] in image units */
var momA = [5,768,10,733,27,713,46,785,83,865,100,850,118,755,137,718,155,706,175,730,192,763,208,757,226,735,245,678,262,676,281,722,300,800,318,908,335,889,355,886,373,896,390,877,408,830,427,874,445,884,463,872,481,770,499,760,517,675,535,620,553,585,572,555,590,496,608,513,627,565,645,640,663,670,681,617,699,697,717,732,735,744,753,790,772,850,790,828,808,763,826,648,845,752,862,733,880,729,898,665,916,560,934,524,953,567,988,524,1006,612,1025,382,1043,449,1079,418,1097,450,1115,608,1133,522,1151,582,1187,625,1206,864,1241,728,1259,940,1278,982,1296,800,1314,780,1332,665,1350,615,1369,482,1385,496,1405,570,1423,640,1441,730,1460,805,1478,895,1496,1036,1514,1040,1532,1087,1550,1207];
var momB = [0,1048,12,1080,24,1190,37,1020,49,947,62,982,74,932,86,912,99,977,111,928,124,1026,136,960,148,805,161,893,173,1033,186,955,198,934,210,1030,222,880,235,888,247,875,260,925,272,1020,285,940,297,825,310,797,322,780,334,658,347,780,359,695,371,700,396,746,408,728,433,757,445,815,458,953,470,946,483,973,495,955,507,827,520,848,532,857,545,872,557,940,569,905,582,675,594,605,607,634,619,628,632,553,644,560,656,540,668,530,681,415,693,375,706,553,718,538,731,595,743,617,755,685,768,615,780,597,793,610,805,695,818,727,830,722,842,780,855,702,867,690];

function line(points, cls) {
  var el = document.createElementNS(NS, "polyline");
  el.setAttribute("points", points.join(" "));
  el.setAttribute("class", "series " + cls);
  return el;
}

function rect(x, y, w, h, cls) {
  var el = document.createElementNS(NS, "rect");
  el.setAttribute("x", x);
  el.setAttribute("y", y);
  el.setAttribute("width", w);
  el.setAttribute("height", h);
  el.setAttribute("class", cls);
  return el;
}

var bandGroup = document.getElementById("bands");
bandGroup.appendChild(line(upper, "s-upper"));
bandGroup.appendChild(line(lower, "s-upper"));
bandGroup.appendChild(line(basis, "s-basis"));
bandGroup.appendChild(line(ma, "s-ma"));

var candleGroup = document.getElementById("candles");
bars.forEach(function (b, i) {
  var cx = Math.round(9 + 15.01 * i);
  var wick = document.createElementNS(NS, "line");
  wick.setAttribute("x1", cx + 0.5);
  wick.setAttribute("x2", cx + 0.5);
  wick.setAttribute("y1", b[0]);
  wick.setAttribute("y2", b[3]);
  wick.setAttribute("class", "wick");
  candleGroup.appendChild(wick);
  if (b[4] === "d") {
    candleGroup.appendChild(rect(cx - 6, b[1] - 1, 13, 3, "doji"));
  } else {
    candleGroup.appendChild(rect(cx - 5.5, b[1] + 0.5, 12, b[2] - b[1], "body body-" + b[4]));
  }
});

var mom = [];
for (var i = 0; i < momA.length; i += 2) {
  mom.push(momA[i] / 1.206, 1240 + momA[i + 1] / 3);
}
for (var j = 0; j < momB.length; j += 2) {
  mom.push(1300 + momB[j] / 0.825, 1240 + momB[j + 1] / 3);
}
document.getElementById("momentum").appendChild(line(mom, "s-mom"));
```
